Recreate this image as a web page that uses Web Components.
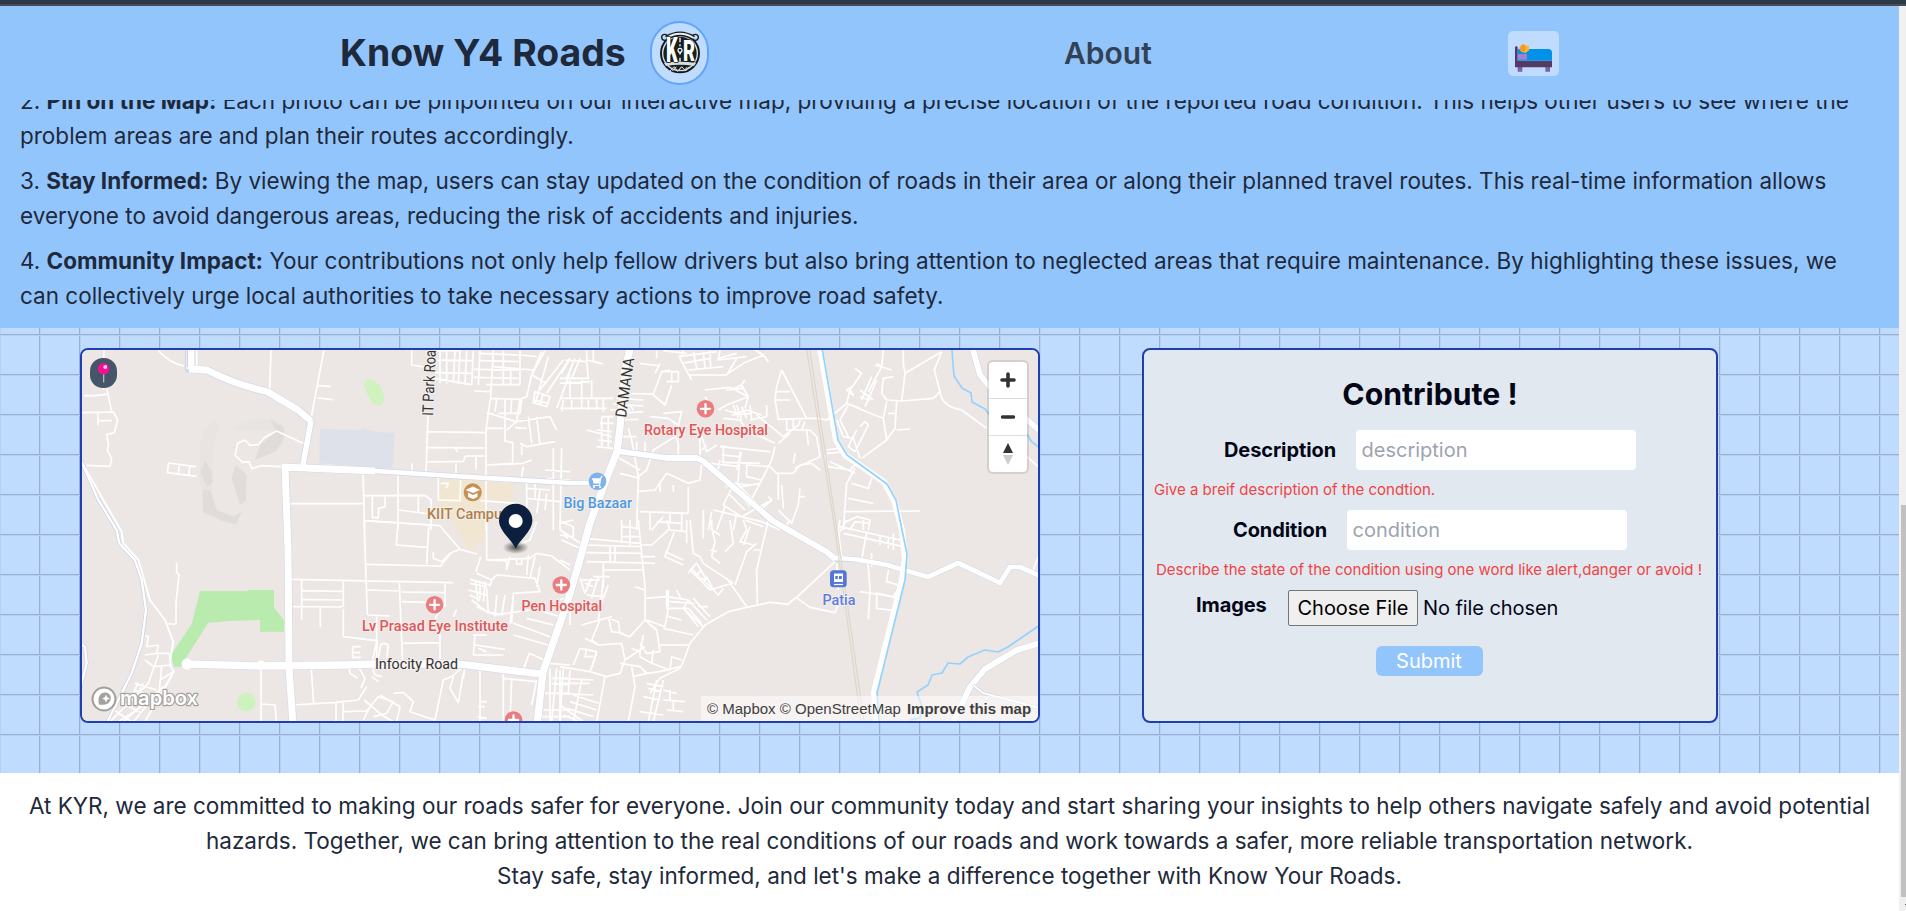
<!DOCTYPE html>
<html lang="en">
<head>
<meta charset="utf-8">
<title>Know Y4 Roads</title>
<style>
html,body{margin:0;height:100%;overflow:hidden;background:#fff}
body{font-family:Inter,"Noto Sans",sans-serif;color:#1e293b}
</style>
</head>
<body>
<kyr-app></kyr-app>
<script>
const define=(name,html)=>customElements.define(name,class extends HTMLElement{
  constructor(){super();this.attachShadow({mode:'open'}).innerHTML=html;}
});

define('kyr-logo',`<style>:host{display:flex;box-sizing:border-box;width:59px;height:64px;border:2px solid #60a5fa;border-radius:30px;background:#bfdbfe;align-items:center;justify-content:center}svg{display:block}</style>
<svg width="42" height="44" viewBox="0 0 126 132">
<circle cx="63" cy="67" r="57" fill="#d9e3ec" stroke="#151a1c" stroke-width="6"/>
<circle cx="63" cy="67" r="50" fill="#17201f"/>
<circle cx="17" cy="19" r="9" fill="#bfdbfe" stroke="#151a1c" stroke-width="4"/><circle cx="109" cy="19" r="9" fill="#bfdbfe" stroke="#151a1c" stroke-width="4"/>
<path d="M22 21Q63-4 104 21" fill="none" stroke="#151a1c" stroke-width="14"/><path d="M22 21Q63-4 104 21" fill="none" stroke="#edf1f2" stroke-width="6"/>
<path d="M15 96Q63 88 111 96L105 105Q63 98 21 105Z" fill="#d9dddc"/>
<path d="M33 120L45 107 57 120 68 107 80 120 91 107M40 120l12-13m3 15l12-13m6 12l12-13" stroke="#d9dddc" stroke-width="3" fill="none"/>
<path d="M63 20V34M63 40V46M63 80V92" stroke="#fff" stroke-width="4"/>
<text x="21" y="92" font-family="Roboto,sans-serif" font-weight="900" font-size="104" textLength="35" lengthAdjust="spacingAndGlyphs" fill="#fff" stroke="#17201f" stroke-width="4" paint-order="stroke">K</text>
<text x="72" y="91" font-family="Roboto,sans-serif" font-weight="900" font-size="86" textLength="36" lengthAdjust="spacingAndGlyphs" fill="#fff" stroke="#17201f" stroke-width="4" paint-order="stroke">R</text>
<circle cx="63" cy="58" r="6" fill="#17201f" stroke="#fff" stroke-width="3.5"/><path d="M59 64L63 73 67 64" fill="#fff"/>
</svg>`);

define('kyr-bed',`<style>:host{display:flex;box-sizing:border-box;width:51px;height:45px;border-radius:5px;background:#bfdbfe;padding:12px 6px 0 7px}svg{display:block}</style>
<svg width="38" height="31" viewBox="0 0 114 93">
<path d="M8 71h14v15H8zM91 71h14v15H91z" fill="#7566ac"/>
<path d="M0 14q0-4 4-4t4 4V53h103v20H0z" fill="#543a65"/>
<path d="M8 18H100q11 0 11 12V53H8z" fill="#0092e8"/>
<path d="M8 33H36V50H8z" fill="#a180d4"/>
<path d="M16 8L25 3 31 7 41 8 43 21 32 30 20 27 12 18z" fill="#ffb52b"/><path d="M18 9L24 3 32 11 28 28 14 20z" fill="#f19a27"/></svg>`);

define('kyr-header',`<style>:host{display:flex;height:94px;align-items:center;background:#93c5fd;flex:none;box-sizing:border-box;padding:0 0 0 340px;white-space:nowrap}
h1{margin:0;font-size:37.4px;line-height:1.2;font-weight:700;color:#1e293b;width:310px;padding-top:1px}
a{margin-left:355px;width:88px;font-size:30px;font-weight:600;color:#334155;line-height:1.2}
kyr-bed{margin-left:356px}</style>
<h1>Know Y4 Roads</h1><kyr-logo></kyr-logo><a>About</a><kyr-bed></kyr-bed>`);

define('kyr-step',`<style>:host{display:block;white-space:nowrap;font-size:22.5px;line-height:35px;font-weight:400}::slotted(b){font-weight:700}</style><slot></slot>`);

define('kyr-intro',`<style>:host{display:flex;flex:none;height:228px;box-sizing:border-box;padding:0 20px 15px;background:#93c5fd;overflow:hidden;flex-direction:column;justify-content:flex-end;gap:10px;color:#1e293b}b{font-weight:700}</style>
<kyr-step>2. <b>Pin on the Map:</b> Each photo can be pinpointed on our interactive map, providing a precise location of the reported road condition. This helps other users to see where the<br>problem areas are and plan their routes accordingly.</kyr-step>
<kyr-step>3. <b>Stay Informed:</b> By viewing the map, users can stay updated on the condition of roads in their area or along their planned travel routes. This real-time information allows<br>everyone to avoid dangerous areas, reducing the risk of accidents and injuries.</kyr-step>
<kyr-step>4. <b>Community Impact:</b> Your contributions not only help fellow drivers but also bring attention to neglected areas that require maintenance. By highlighting these issues, we<br>can collectively urge local authorities to take necessary actions to improve road safety.</kyr-step>`);

define('map-controls',`<style>:host{display:flex;flex-direction:column;width:38px;height:110px;background:#fff;border-radius:4px;box-shadow:0 0 0 2px rgba(0,0,0,.1)}
div{flex:1;display:flex;align-items:center;justify-content:center}div+div{border-top:1px solid #ddd}svg{display:block}</style>
<div><svg width="16" height="16" viewBox="0 0 16 16"><path d="M8 2V14M2 8H14" stroke="#333" stroke-width="3.6" stroke-linecap="round"/></svg></div>
<div><svg width="16" height="16" viewBox="0 0 16 16"><path d="M2.5 8H13.5" stroke="#333" stroke-width="3.4" stroke-linecap="round"/></svg></div>
<div><svg width="12" height="24" viewBox="0 0 12 24"><path d="M1 11L6 1 11 11z" fill="#333"/><path d="M1 13L6 23 11 13z" fill="#ccc"/></svg></div>`);

const hosp=(x,y)=>`<g transform="translate(${x} ${y})"><circle r="8.8" fill="#ea7d80"/><path d="M0-4.6V4.6M-4.6 0H4.6" stroke="#fff" stroke-width="2.3" stroke-linecap="round"/></g>`;
const label=(x,y,w,t,c,extra='')=>`<text x="${x}" y="${y}" textLength="${w}" lengthAdjust="spacingAndGlyphs" fill="${c}" ${extra}>${t}</text>`;
const NW=`M102 60L100 180M110 175L125 245M42 197L75 197 110 193M36 248L130 246 143 270 133 308 110 314 116 345 112 360 125 385 120 409 50 406M84 250V286M84 272H125
M265 62Q300 100 342 108M375 60L370 110M603 60L599 180M762 60L722 270M745 167L782 169M742 204L788 209M296 397L292 428 380 439M296 399L378 410M328 403L325 432M360 409L356 435
M635 410L575 407 545 415 537 395 518 397 495 375 503 340 525 330 540 346 565 344 582 323 620 303 702 341M660 521H880M879 430L884 600M984 437V600M883 497L1065 496 1083 510 1083 600M907 500V562L925 564 926 535 945 530V500M1045 500V548M985 540L1080 552M884 572L1085 585
M1074 255L1068 430M1074 305L1245 308M1070 352L1243 354M1070 396L1180 394 1186 378M1155 355L1163 365M1158 400V430M1188 378H1243M1218 380V418M1026 400V428M1105 445V510L1170 512 1172 450M1112 460L1135 460 1128 475M1232 512L1340 520M1270 60L1262 200 1248 300V600M1213 183L1260 185
M1260 205L1350 208 1370 200 1385 135 1425 62M1415 65L1385 135 1430 160M1435 80L1400 205M1350 208L1340 275 1250 248M1305 208V333L1328 338V400L1250 405M1280 208L1275 245M1325 208L1322 250M1355 210L1350 250 1285 250M1250 295H1300M1340 275L1440 260 1460 300M1335 293L1370 295M1350 340L1370 350 1455 335M1355 348V375M1375 260L1385 340M1400 260L1410 345M1310 300L1340 275M1255 405L1360 400 1385 390M1355 440L1360 410M1370 450V600M1395 450V510M1370 475L1440 480M1370 505L1470 515M1450 355V600M1475 355L1470 600M1425 420L1500 425M1430 445L1500 450M1410 480L1400 550M1430 490L1425 540M1340 520L1340 600
M1090 62H1170M1090 90L1210 92M1025 60V105L1070 112M1095 128L1210 130M1110 60V160M1130 60V160M1155 62L1150 160M1170 60L1165 162M1190 62L1185 165M1210 62L1205 165M1095 145L1205 164M1230 62L1225 165M1225 70L1345 75M1225 92L1345 95M1212 118L1345 120M1210 142L1345 145M1248 164H1350M1300 62V164M1322 120V164M1350 62V164M1350 75L1400 80M1270 110L1390 120
M1395 185L1440 200 1430 230 1390 218ZM1405 190L1395 222M1420 190L1410 225M1390 210L1435 220M1500 85L1430 190M1480 90L1410 180M1500 130L1460 235`;
const SW=`M320 128V155L327 165 318 250V312H292M665 178L850 182 1150 188M695 180V300M667 260L818 261M697 212L818 214M697 238L817 240M820 184V260M751 262V322M820 268V350L922 363M882 0L892 285M883 2L1110 17 1170 88 1220 102M1076 20L1070 133M890 133L1112 138 1143 98 1170 88M984 8L979 75 1070 82M1090 95V115L1115 125 1140 100M892 210L985 213M988 190L998 435M995 216L1125 218M995 245L1090 248M1125 190V260M1125 255L1098 290 1090 335M1110 340V435M1150 290L1160 268M920 290V365L905 430M895 285L960 288M998 370L1110 368
M820 350L922 362 918 432M848 380H872M848 380V415M850 398H870M848 412H872M922 430L932 375Q940 365 955 375L948 430M835 435L840 460 863 475M865 440L885 475 873 505M905 435L915 465 935 470M905 470L925 485M573 440V605M575 552L615 555 619 605M724 448L731 550M670 555L798 547 865 540 890 500M798 548V605M820 548L818 605M820 575L890 573 925 530 970 545 950 580 910 590M883 540L935 585 970 605M900 560L880 600M970 520L1000 517 1030 545 1020 575 1095 600M930 525L990 560 980 605M1095 600L1120 480 1148 468 1185 435M1150 470L1140 505 1165 548 1180 460M1230 445V605M1230 545H1250M1225 560H1245M1222 590L1250 595M1300 460V605M1325 475L1320 605M1300 475L1400 485M1400 480L1385 555M1185 435L1180 475M1330 440L1360 448 1378 400 1435 425M1215 345L1210 405 1300 405M1215 375L1305 388M1225 385L1250 395M1210 345H1250M1330 345L1435 375M1330 310L1440 350M1370 295L1450 315M1420 275L1470 290
M1220 160L1265 180 1280 165 1395 175 1410 215 1330 220 1325 310M1265 180L1260 200M1232 110L1218 155M1250 0V120L1310 123V150M1250 120L1380 115 1400 100 1445 108 1500 150M1320 110L1310 150M1340 118V132H1355V120M1395 110L1380 175M1375 105L1370 165M1410 140L1400 200M1400 5L1380 60 1345 75M1200 178L1260 195M1200 190L1250 200M1195 210L1250 225M1200 225L1230 240M1215 180L1225 245M1230 182V235M1245 185L1240 245M1205 240L1250 275 1300 285M1250 205L1255 280M1280 225L1275 290M1305 225L1295 285M1330 230L1320 310M1220 260L1275 285 1380 270
M225 405L260 400 265 375 230 380 235 350 225 348M260 400H298M225 420L250 440 305 435M265 405L235 490M298 400L302 440 312 455 265 540M275 440L265 540M195 490L260 510M190 510L255 530M205 488L180 540M220 490L195 540M235 490L120 605M255 535L145 605M310 455L225 605M270 480L310 455M270 510L190 605M125 565L185 605M150 545L215 580M170 525L230 555M280 500L160 605M1435 430L1500 435M1440 445V605M1460 445L1445 605M1480 445L1470 605M1445 475H1500M1445 490L1500 495M1420 520H1500M1420 570H1500M1415 590H1500`;
const NE=`M0 205H160M0 160L90 155M15 90L80 95 85 145 0 145M30 85L5 130M45 85L20 145M60 85L35 145M30 150V205M65 150V235M95 150V205M80 60V90L125 100M100 60V95L130 102M0 235H140M10 210L5 245M35 210V240M85 210V240M110 205V240M130 205V245M175 190L280 192 305 125 330 120M240 100L300 108M275 190L315 225 335 165M310 62L380 70M290 62V85M300 100L285 130M315 125H355V155L320 155M335 125V155M370 62L360 85 395 150M355 80L470 65M365 100L450 85M385 120L490 110M390 135L500 135M400 65L410 115M430 65L435 115M450 62L452 110M480 62L475 85 530 70M505 130L550 100 610 75 585 60M610 75L625 95M530 85L500 135M470 90L560 80M170 205L250 210M160 222L250 228M150 240L210 240M125 260L160 260M120 280L160 280M110 300L155 305M80 300L155 320M125 260V350M115 330L155 335M110 350L160 355M145 260V355M180 250L250 245M175 270L235 268M175 320L230 320M210 225L220 240
M205 295L215 330 235 440M230 335V365M255 335V365M280 360L260 420 235 440M310 250L365 245 355 285M270 260L325 265 360 290M300 290L340 300M340 300L355 340V380M345 320L280 360M425 318L440 365 470 345M435 180L510 172 565 200 555 235M500 180L550 175M435 200L445 215M540 170L555 150M510 180L545 165 565 200 500 225 475 240M495 240L530 250 560 240 605 255M530 225L545 270M520 225L535 265M515 255L575 250M545 230L560 265M570 225L575 265M570 270L620 260 620 225M590 255L670 320 715 285 720 270M490 265L540 270 560 300 645 340M480 350L630 365M485 375L540 380M485 397L600 400M490 345V400M545 365L530 420M480 390L470 440M540 365L535 450 525 485M450 400L540 410M420 320L420 380M425 360L440 345
M665 120L650 170 645 210 655 268 740 265 665 120M645 185H690M643 210H690M680 268V300H725L735 275M700 268V300M740 265L770 265 800 270 860 220 900 235M720 300L750 300 770 320 780 380 705 415M740 300L745 345M655 340L690 310M645 350L635 390 600 460 565 525M605 450L560 440 560 405 630 410 650 430 700 430 720 405 755 400 780 420M705 370L700 400M655 430V510M720 500H735M720 475L715 525 695 580 655 540M665 465L670 535M600 540L635 510 625 500
M600 460L515 475 490 525 545 560 625 515M505 490L555 540M520 475L570 530M535 465L590 520M480 430L500 470 525 460 565 465M495 530L470 600M530 550L520 600M460 540L605 575 660 600M235 440L230 600M230 485L285 480 320 430 385 460M300 455V485M340 465V485M385 470V550M385 550L240 545M330 545V575M365 545V600M270 545V600M290 575L365 580M310 560L275 600M430 540V600M385 460L420 450 425 400M455 545L445 600M170 380L240 420M180 430L240 445
M1145 65L1035 130 1030 100M1145 65L1123 120 1140 185 1120 205 1025 213 980 210 965 190 970 145 1000 140M1140 185Q1145 230 1205 240L1280 295M1035 130L1025 215M970 60L965 110 950 100M1030 100V60M945 105L995 120M965 110L925 185M950 150L915 230M935 140L905 210M885 115L905 130 870 180 880 195 860 180 875 170M870 180L860 220M900 180L940 210M900 200L930 210M860 220L930 250 970 265 980 330M1010 215L1005 295 980 330 905 385M980 215L970 265M985 250H1010M1010 300L1050 297M865 225L840 270 865 320M900 290L915 275 925 285 885 365 865 350 890 300M830 270L850 320 880 325 900 385M800 360L835 355M795 375L805 410 870 420 890 400M800 370L860 365M810 395L885 430M885 415L860 460 850 600M875 460L925 475 935 445M865 505L940 520M850 545L1080 543M850 580L890 560 930 570 925 600M870 600L885 575 930 580M1400 380L1435 410`;
const SE=`M0 10L40 0M0 30L70 75M5 5L40 20 40 50 0 45M0 120L30 135M75 75L245 80M75 98L245 100M80 125L285 130M130 130V205M150 75V125M165 80V125M75 55L240 70M185 0V70M210 0V75M185 20L235 25M185 50L240 50M130 150H250M100 170H150M235 0L255 200 255 300M240 110H285M320 0L330 30 380 35M380 0V70M345 30L315 110 370 135M240 75L275 75 330 25M390 0L400 100 420 110 430 130 520 190M430 0V55M455 0V30L480 45M450 0L465 65 455 110 480 130M450 90L470 95M510 0L520 70 495 95M550 0L560 30 540 65 580 75M570 20L550 75M555 0L610 20M590 70L560 95 525 195M600 90L580 90M500 175L560 260M625 0L590 150 592 252M515 190L450 210 390 150 410 130 440 180M405 135L385 160M395 145L420 175 445 180M410 165L425 150M430 180L475 225 490 205M440 170L460 210M315 95L370 120M680 15L690 0
M710 232L825 125M708 232L750 262 825 278 840 240M830 130L835 210M685 252L708 232M685 253L630 247 560 262 505 275 435 315 390 370 370 425 360 445 300 475 270 520M255 300L210 350 180 340 175 305 145 295M225 200L255 210M255 235L320 230 385 240M320 210V265L385 265 425 310M350 210L365 240M325 210V260M385 240L370 265 415 320M385 240L440 300M400 235L450 290M330 245L400 250M370 265L430 320M415 260L445 260M325 265L315 320 260 300M325 290L365 300M310 325L400 345M255 300L290 330 300 395 260 400 240 370M300 375L385 375M250 345L240 395 215 385M185 370L115 375 75 355M120 300L95 360 115 375M65 315L155 290M145 290L155 335 190 340M185 370L195 420 180 460 140 470 90 455 0 440M240 390L240 410 275 430 280 390M180 430L240 440 260 460 300 455 360 440M195 420L255 380M330 450L335 410 365 420M275 430L330 450M215 440L225 500 205 605M220 470L260 460M260 490L310 500M265 505L305 515M250 530L300 540M290 480L265 605M310 480L280 605M310 510L350 520M310 540L375 545M320 570L370 575M330 510V540M340 545V575M240 575L310 585
M60 385L110 395 90 455M60 385L40 435M80 385L75 410 100 410M110 400L95 445M0 475L100 480M0 490L90 490M0 520L100 525M0 450V600M30 450L25 520M65 480L40 605M40 525L115 550M30 545L110 570M20 565L100 590M10 585L60 605M135 470L110 605M0 555L70 605
M60 175L75 220 90 180M65 180H120M95 175L75 220M115 170L95 235M130 180L115 300M80 225L130 230M75 190L100 200M145 195L120 260M30 270V315M5 60L60 85M10 45L25 55M0 240L20 230M840 20L1020 60M840 0L835 30 845 115M860 0L840 35M850 40L1030 80M920 35L905 120M960 50V75M985 50V85M1000 40V90M910 0V30M920 125L925 140 930 210 925 298M900 215L1000 230 1020 200M950 215V265L1005 272M955 220L1015 235M935 100V140M985 150L980 185 1015 195M1000 55V45M1420 150L1435 110`;

define('road-map',`<style>:host{display:block;position:relative;width:956px;height:371px;overflow:hidden;background:#ece7e4}
.scene{display:block}.scene text{font-family:Roboto,"Noto Sans",sans-serif;font-size:15.5px;font-weight:500;stroke:#f3efec;stroke-width:2px;paint-order:stroke;stroke-linejoin:round}
map-controls{position:absolute;right:11px;top:12px}.pin{position:absolute;left:8px;top:8px;width:27px;height:30px;border-radius:13px;background:#475569}
.attr{position:absolute;right:0;bottom:0;height:25px;width:337px;background:rgba(255,255,255,.5);font-family:"Liberation Sans",sans-serif;font-size:15px;line-height:25px;color:#404040;box-sizing:border-box;padding-left:6px;white-space:nowrap;display:flex;gap:6px}</style>
<svg class="scene" width="956" height="371" viewBox="82 350 956 371">
<g transform="translate(70 330) scale(.333333)">
<path d="M750 297L875 300 880 294 920 305 974 309 968 418 748 400Z" fill="#dee1ea"/>
<path d="M882 165Q885 145 908 149L930 165 945 205 932 227 910 222 893 195Z" fill="#d0f2bf"/>
<path d="M1112 445L1330 462 1326 515 1245 512 1245 636 1215 636V668L1190 655 1165 600 1135 560 1105 530Z" fill="#f0e6d1"/>
<path d="M400 300L430 272 452 285 435 320 430 390 425 490 440 540 490 560 515 545 500 585 460 575 400 550 395 490 390 420 390 350Z" fill="#e7e4e1"/>
<path d="M475 298L550 270 610 268 642 290 640 330 620 345 600 300 500 300Z" fill="#e7e4e1"/>
<path d="M600 270L642 290 640 330 620 362 555 390 570 345 620 303Z" fill="#e0dcd8"/>
<path d="M405 390L425 425 428 455 412 470 392 430ZM497 405L530 435 528 510 510 525 485 445ZM398 480L420 480 440 540 490 560 515 545 498 582 460 573 400 545Z" fill="#dfdcd9"/>
<path d="M390 783L535 783V780H612V833L642 870V905H570V870L480 873 415 878 348 983 335 1010H312L303 975 365 882Z" fill="#b9eaae"/>
<circle cx="529" cy="1116" r="28" fill="#cdf2bd"/>
</g>
<g fill="none" stroke="#fff" stroke-width="5" stroke-linejoin="round">
<g transform="translate(70 330) scale(.333333)"><path d="${NW}"/></g>
<g transform="translate(70 520) scale(.333333)"><path d="${SW}"/></g>
<g transform="translate(560 330) scale(.333333)"><path d="${NE}"/></g>
<g transform="translate(560 520) scale(.333333)"><path d="${SE}"/></g>
</g>
<g fill="none" stroke-linejoin="round">
<g transform="translate(70 330) scale(.333333)">
<g stroke="#cbd1e1" stroke-width="11"><path d="M30 385L85 510 140 600 148 640 195 690 215 750 228 840 215 940 185 1030 110 1180M36 945L45 950 50 1000 30 1080"/></g>
<path d="M30 385L85 510 140 600 148 640 195 690 215 750 228 840 215 940 185 1030 110 1180M36 945L45 950 50 1000 30 1080" stroke="#fff" stroke-width="7"/>
<path d="M34 395L155 605 160 640 205 690 240 810 285 870 310 935 300 990" stroke="#fff" stroke-width="6"/>
</g>
<g stroke="#d3d8e6">
<path stroke-width="8.2" d="M189 340V369L207 370C227 380 240 385 268 392L298 410 311 421M282 467L375 471M285 466L288 550 289 667 293 725"/>
<path stroke-width="8.4" d="M187 664L260 666 345 665 375 664 459 664 541 674M632 340L625 370 620 427 617 452 607 477 590 523 577 570 567 603 543 672 537 725"/>
<path stroke-width="7" d="M311 421L303 465M617 451L667 458 697 458 703 461 773 521 827 552 835 559M973 350L980 375 990 387 1040 431M1040 643L1017 650 985 669 970 687 953 722"/>
<path stroke-width="5.8" d="M375 471L470 477 570 483H598M835 559L854 559 887 565 928 577 958 563 973 570 1000 583 1010 567 1020 567 1040 576"/>
</g>
<g stroke="#fff" stroke-width="7">
<path d="M192 340V369" stroke-width="11"/><path d="M189 369L207 370C227 380 240 385 268 392L298 410 311 421" stroke-width="6.8"/><path d="M311 421L303 465" stroke-width="5.5"/><path d="M187.500 340V367M195 340V366" stroke="#cbd1e1" stroke-width="1"/>
<path d="M375 471L470 477 570 483H598" stroke-width="4.6"/><path d="M282 467L375 471M285 466L288 550 289 667 293 725"/>
<path d="M187 664L260 666 345 665 375 664 459 664 541 674M632 340L625 370 620 427 617 452 607 477 590 523 577 570 567 603 543 672 537 725" stroke-width="7.3"/>
<path d="M617 451L667 458 697 458 703 461 773 521 827 552 835 559M973 350L980 375 990 387 1040 431M1040 643L1017 650 985 669 970 687 953 722" stroke-width="5.8"/><path d="M834 558L854 559 887 565 928 577 958 563 973 570 1000 583 1010 567 1020 567 1040 576" stroke-width="4.7"/>
</g>
<circle cx="187" cy="664" r="5.500" fill="#fff"/><circle cx="261" cy="665" r="4.500" fill="#fff"/>
<path d="M806 345L835 530 861 722M809 345L837 530 864 722" stroke="#ddd6ca" stroke-width="1.2"/>
<path d="M820 348L836 440 845 455 884 482 894 500 902 530 905 558 902 580 874 692 876 722" stroke="#fff" stroke-width="6"/>
<path d="M822 348L838 440 847 455 887 484 896 500 901 525 907 554 905 580 877 693 879 722M952 350L954 376 962 388 971 393 972 402 985 409 1001 430 1026 433 1032 442 1040 448M1040 625L1008 647 998 652 985 650 968 657 960 664 948 663 942 673 932 675 928 685 917 692 922 707 920 718 910 720" stroke="#96d2fb" stroke-width="1.7"/>
<path d="M973 685L983 693 1040 708" stroke="#c8cfe0" stroke-width="3"/><path d="M973 685L983 693 1040 708" stroke="#fff" stroke-width="2"/>
</g>
${hosp(705.5,408.8)}${hosp(561.3,585)}${hosp(434.6,604.8)}${hosp(513.5,720)}
<circle cx="472.7" cy="492.3" r="9" fill="#c88f52"/><path d="M465.5 490L473 486.5 480 490 473 493Z" fill="#fff"/><path d="M468 492.5V497L473 499 477.5 497V493L473 495Z" fill="#fff"/>
<circle cx="597.5" cy="481.2" r="8.8" fill="#7fb2ea"/><path d="M592.5 479H600L599.5 483.500H593.500Z" fill="#fff"/><path d="M592 478.800H600.500L602 475.800M600.500 478.800L599.500 485.500H593" fill="none" stroke="#fff" stroke-width="1.2"/><circle cx="594" cy="487" r="1.1" fill="#fff"/><circle cx="600" cy="487" r="1.1" fill="#fff"/>
<rect x="830" y="570.3" width="16.7" height="17" rx="3.5" fill="#5377d5"/><path d="M834 573.5H843V582H834Z" fill="#fff"/><path d="M835.3 576H837.8V579H835.3ZM839 576H841.8V579H839Z" fill="#5377d5"/><path d="M834 584.5H843" stroke="#fff" stroke-width="1.2"/>
${label(644,435,124,'Rotary Eye Hospital','#e05659')}
${label(521.5,610.5,80.5,'Pen Hospital','#e05659')}
${label(362,631,146,'Lv Prasad Eye Institute','#e05659')}
${label(563.5,507.5,68.5,'Big Bazaar','#4f98e3')}
${label(427,518.5,75,'KIIT Campu','#b17f48')}
${label(822.5,605,33,'Patia','#5f7ddd')}
${label(375,668.5,83,'Infocity Road','#333','style="font-weight:400"')}
<g transform="translate(433 416) rotate(-87.5)">${label(0,0,66,'IT Park Roa','#333','style="font-weight:400"')}</g>
<g transform="translate(626 418) rotate(-82)">${label(0,0,60,'DAMANA','#333','style="font-weight:400"')}</g>
<defs><radialGradient id="s"><stop offset="0" stop-opacity=".65"/><stop offset="1" stop-opacity="0"/></radialGradient></defs>
<ellipse cx="515.7" cy="547.5" rx="13" ry="6.5" fill="url(#s)"/>
<path d="M515.7 548.5C512 540 499 531 499 520.5A16.7 16.7 0 0 1 532.4 520.5C532.4 531 519.5 540 515.7 548.5Z" fill="#0c1f3f"/><circle cx="515.7" cy="521" r="7" fill="#fff"/>
<circle cx="104" cy="699" r="11.5" fill="#fff" fill-opacity=".9" stroke="#a3a09e" stroke-width="2"/><path d="M99 704.5C97 696 101 692 106 692.5 112 694 112 700 108 703.5 105 705 102 705 99 704.5Z" fill="#a3a09e"/><path d="M106 694.5L107.2 697.3 110 698.5 107.2 699.7 106 702.5 104.8 699.7 102 698.5 104.8 697.3Z" fill="#fff"/>
<text x="120" y="705" textLength="78" lengthAdjust="spacingAndGlyphs" style="font-family:Inter,sans-serif;font-size:20px;font-weight:600;stroke:#a3a09e;stroke-width:2.4px" fill="#fff">mapbox</text>
</svg>
<div class="pin"><svg width="27" height="30" viewBox="0 0 27 30"><path d="M13.7 15V24.5" stroke="#c3cad3" stroke-width="1.1"/><circle cx="13.6" cy="10.7" r="5.7" fill="#fa0c93"/><circle cx="15.3" cy="9" r="1.9" fill="#ffd9ef"/></svg></div>
<map-controls></map-controls>
<div class="attr"><span>© Mapbox © OpenStreetMap</span><b>Improve this map</b></div>`);

define('form-row',`<style>:host{display:flex;justify-content:center;align-items:center;height:40px;font-size:20px;gap:20px;white-space:nowrap}::slotted(b){font-weight:700;letter-spacing:-.1px}.in{width:280px;height:40px;border-radius:4px;background:#fff;box-sizing:border-box;padding-left:5.500px;line-height:40px;color:#9ca3af}</style><slot></slot><div class="in"><slot name="hint"></slot></div>`);

define('contribute-form',`<style>:host{display:flex;flex-direction:column;box-sizing:border-box;width:576px;height:375px;border:2px solid #1e40af;border-radius:8px;background:#e2e8f0;color:#020617;white-space:nowrap}
h2{margin:24px 0 16px;font-size:30.2px;line-height:40px;text-align:center;font-weight:700}
p{margin:0;height:40px;line-height:39px;font-size:15px;color:#ef4444;font-weight:400}
.a{padding-left:10px}.b{padding-left:12px}
.f{display:flex;font-size:20px;height:36px;padding-left:52px;color:#020617}.f b{font-weight:700;letter-spacing:-.1px;width:92px;line-height:30px}
.c{box-sizing:border-box;width:130px;height:36px;border:1px solid #767676;border-radius:2px;background:#efefef;text-align:center;line-height:35px;color:#000;margin-right:5px;letter-spacing:-.05px}.f span{line-height:36px;letter-spacing:-.07px}
button{font:400 20px/30px Inter,sans-serif;border:0;padding:0;width:107px;height:30px;border-radius:6px;background:#93c5fd;color:#fff;align-self:center;margin:20px 2px 0 0}</style>
<h2>Contribute !</h2>
<form-row><b>Description</b><span slot="hint">description</span></form-row>
<p class="a">Give a breif description of the condtion.</p>
<form-row><b>Condition</b><span slot="hint">condition</span></form-row>
<p class="b">Describe the state of the condition using one word like alert,danger or avoid !</p>
<div class="f"><b>Images</b><div class="c">Choose File</div><span>No file chosen</span></div>
<button>Submit</button>`);

define('kyr-workspace',`<style>:host{display:flex;flex:none;box-sizing:border-box;height:445px;padding:20px 0 0 80px;gap:102px;align-items:flex-start;background-color:#bfdbfe;
background-image:linear-gradient(#9ab0ce 1px,#b6d0f3 1px,#b6d0f3 2px,transparent 2px),linear-gradient(90deg,#9ab0ce 1px,#b6d0f3 1px,#b6d0f3 2px,transparent 2px);background-size:40px 40px;background-position:39px 6px}
.card{box-sizing:border-box;width:960px;height:375px;border:2px solid #1e40af;border-radius:8px;overflow:hidden}</style>
<div class="card"><road-map></road-map></div><contribute-form></contribute-form>`);

define('kyr-closing',`<style>:host{display:block;flex:1;background:#fff;padding-top:15px;text-align:center;font-size:22.5px;line-height:35px;font-weight:400;color:#1e293b;white-space:nowrap}</style>At KYR, we are committed to making our roads safer for everyone. Join our community today and start sharing your insights to help others navigate safely and avoid potential<br>hazards. Together, we can bring attention to the real conditions of our roads and work towards a safer, more reliable transportation network.<br>Stay safe, stay informed, and let's make a difference together with Know Your Roads.`);

define('kyr-app',`<style>:host{display:flex;flex-direction:column;height:911px;width:1906px;overflow:hidden}
.top{height:4px;flex:none;background:#2b3c48;border-bottom:2px solid #4a4a54}
.body{flex:1;display:flex;min-height:0}.page{width:1899px;flex:none;display:flex;flex-direction:column;overflow:hidden}
.bar{flex:1;background:#f0f0f0;padding:499px 0 0 2px}.thumb{height:392px;background:#c1c1c1}.arr{width:1px;height:1px;margin:7px 0 0 4px;background:#555}</style>
<div class="top"></div><div class="body"><div class="page"><kyr-header></kyr-header><kyr-intro></kyr-intro><kyr-workspace></kyr-workspace><kyr-closing></kyr-closing></div><div class="bar"><div class="thumb"></div><div class="arr"></div></div></div>`);
</script>
</body>
</html>
